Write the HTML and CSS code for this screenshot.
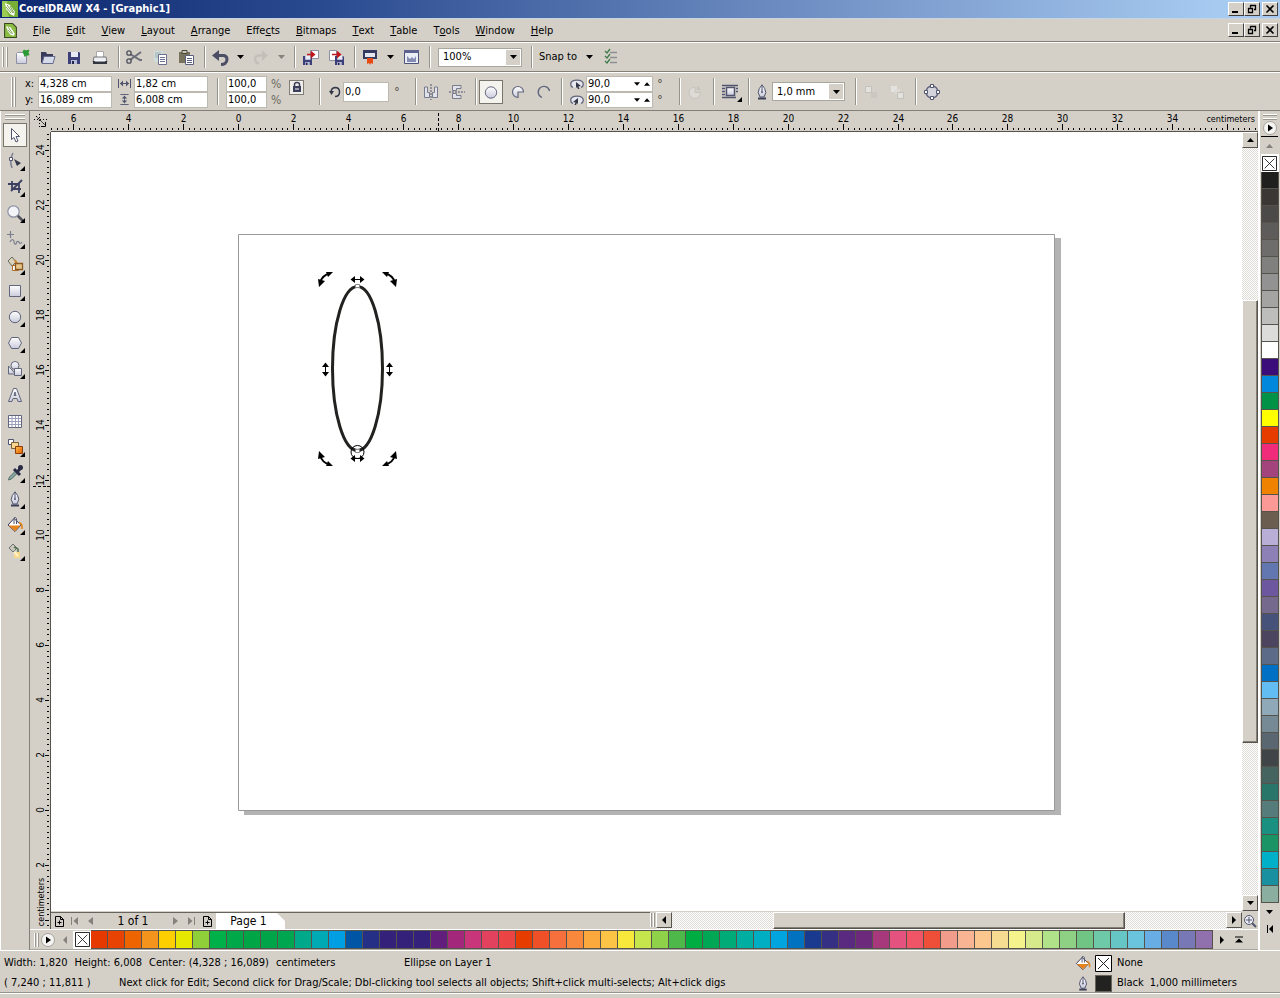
FILE: index.html
```html
<!DOCTYPE html>
<html lang="en">
<head>
<meta charset="utf-8">
<title>CorelDRAW X4 - [Graphic1]</title>
<link rel="stylesheet" href="styles.css">
</head>
<body>
<svg class="defs" aria-hidden="true">
  <defs>
    <linearGradient id="glass" x1="0" y1="0" x2="0" y2="1"><stop offset="0" stop-color="#fff"/><stop offset="1" stop-color="#c9cbdc"/></linearGradient>
    <linearGradient id="orange" x1="0" y1="0" x2="1" y2="1"><stop offset="0" stop-color="#ffc04a"/><stop offset="1" stop-color="#e25a00"/></linearGradient>
    <symbol id="down" viewBox="0 0 7 4"><path d="M0 0h7L3.500 4z" fill="currentColor"/></symbol>
    <symbol id="up" viewBox="0 0 7 4"><path d="M0 4h7L3.500 0z" fill="currentColor"/></symbol>
    <symbol id="left" viewBox="0 0 4 8"><path d="M4 0v8L0 4z" fill="currentColor"/></symbol>
    <symbol id="right" viewBox="0 0 4 8"><path d="M0 0v8l4-4z" fill="currentColor"/></symbol>
    <symbol id="disk" viewBox="0 0 12 12"><path d="M0 0h11l1 1v11H0z" fill="#3c3f78"/><path d="M3 0h7v5H3z" fill="#e8eaf4"/><path d="M3 8h6v4H3z" fill="#b9bed8"/><path d="M4 9h2v3H4z" fill="#23254c"/></symbol>
    <symbol id="balloon" viewBox="0 0 16 16"><path d="M0 0h16v16H0z" fill="#77ae35"/><path d="M0 0h6l-3 5 4 11H0z" fill="#9bcb52"/><path d="M3 2l5 2 5 7-1 4-4-2-4-5z" fill="#fff"/><path d="M5 4l6 8M8 5l4 7M4 6l5 6" stroke="#568a20" stroke-width=".8"/></symbol>
    <symbol id="bucket" viewBox="0 0 16 16"><path d="M7 1.500L14 8l-6 6.500L1 8z" fill="#fff" stroke="#35385a"/><path d="M1.500 8.500h12L8 14.200z" fill="#e8841c"/><path d="M7 7V1.500q0-1.500 1.500-1t1 3V7" fill="none" stroke="#50546e"/><path d="M12 6q3.500 0 3 6" fill="none" stroke="#e08a28" stroke-width="1.800"/></symbol>
    <symbol id="nib" viewBox="0 0 12 16"><path d="M6 .8Q2.500 4.500 2.200 8.500L4 13h4l1.800-4.500Q9.500 4.500 6 .8z" fill="url(#glass)" stroke="#50546e"/><path d="M6 2v5" stroke="#50546e"/><circle cx="6" cy="8" r="1" fill="#50546e"/><path d="M2 13.500h8v2H2z" fill="#3c4058"/></symbol>
    <symbol id="none" viewBox="0 0 17 17"><path d="M.5.5h16v16H.5z" fill="#fff" stroke="#000"/><path d="M3 3l11 11M14 3L3 14" stroke="#222"/></symbol>
    <symbol id="play" viewBox="0 0 14 14"><circle cx="7" cy="7" r="6.500" fill="#f4f4f2" stroke="#a5a39b"/><path d="M5 3.500v7L10 7z" fill="#000"/></symbol>
    <symbol id="addpage" viewBox="0 0 9 11"><path d="M.5.500h5l3 3v7h-8zM5.500.500v3h3M2.500 6.500h4M4.500 4.500v4" fill="none" stroke="#000"/></symbol>
    <symbol id="min" viewBox="0 0 12 10"><path d="M2 7h6v2H2z"/></symbol>
    <symbol id="restore" viewBox="0 0 12 10"><path d="M4 1.500h6M4.500 1v2.500M9.500 1v4.500H8M2 4.500h5M2.500 4v4.500h4V4" fill="none" stroke="#000" stroke-width="1.300"/></symbol>
    <symbol id="close" viewBox="0 0 12 10"><path d="M2.500 1.500l7 7M9.500 1.500l-7 7" stroke="#000" stroke-width="1.600"/></symbol>
    <symbol id="angle" viewBox="0 0 14 10"><path d="M3 8.500Q.7 7.500.7 5.200.7 1.200 7 1.200t6.300 4Q13.300 7.500 11 8.500" fill="#e6e7ee" stroke="#62667c" stroke-width="1.300"/></symbol>
  </defs>
</svg>

<header class="titlebar">
  <svg class="i16"><use href="#balloon"/></svg>
  <h1 class="title">CorelDRAW X4 - [Graphic1]</h1>
  <div class="winbtns">
    <button class="winbtn" aria-label="Minimize"><svg><use href="#min"/></svg></button><button class="winbtn" aria-label="Restore"><svg><use href="#restore"/></svg></button><button class="winbtn apart" aria-label="Close"><svg><use href="#close"/></svg></button>
  </div>
</header>

<nav class="menubar">
  <svg class="docicon" viewBox="0 0 12 14"><path d="M.5.5H8L11.500 4v9.500H.5z" fill="#8cbd45" stroke="#38481e"/><path d="M2 3l4 1 4 6-1 2-3-1-3-4z" fill="#fff"/><path d="M4 4l4 6M3 6l4 4" stroke="#568a20" stroke-width=".7"/></svg>
  <button class="menu"><u>F</u>ile</button>
  <button class="menu"><u>E</u>dit</button>
  <button class="menu"><u>V</u>iew</button>
  <button class="menu"><u>L</u>ayout</button>
  <button class="menu"><u>A</u>rrange</button>
  <button class="menu">Effe<u>c</u>ts</button>
  <button class="menu"><u>B</u>itmaps</button>
  <button class="menu"><u>T</u>ext</button>
  <button class="menu"><u>T</u>able</button>
  <button class="menu">T<u>o</u>ols</button>
  <button class="menu"><u>W</u>indow</button>
  <button class="menu"><u>H</u>elp</button>
  <div class="winbtns">
    <button class="winbtn" aria-label="Minimize document"><svg><use href="#min"/></svg></button><button class="winbtn" aria-label="Restore document"><svg><use href="#restore"/></svg></button><button class="winbtn apart" aria-label="Close document"><svg><use href="#close"/></svg></button>
  </div>
</nav>

<div class="bar standard" role="toolbar" aria-label="Standard">
  <span class="grip"></span>
  <button class="tb" aria-label="New"><svg viewBox="0 0 18 18"><path d="M3.500 5.500l1-1h7l2 2v9h-10z" fill="url(#glass)" stroke="#8d90a4"/><path d="M11 2l2 1 3-1-1 2.500 1 2.500-2.500 0-1.500 1.500-1-2.500-1-2z" fill="#2c9a34" stroke="#2c9a34"/></svg></button>
  <button class="tb" aria-label="Open"><svg viewBox="0 0 18 18"><path d="M2 15V4h5l1 2h6v3" fill="#383b5c"/><path d="M3 15.500L5 8.500h11l-2 7z" fill="#d5dae9" stroke="#65698a"/></svg></button>
  <button class="tb" aria-label="Save"><svg viewBox="0 0 18 18"><use href="#disk" x="3" y="4" width="12" height="12"/></svg></button>
  <button class="tb" aria-label="Print"><svg viewBox="0 0 18 18"><path d="M5.500 10V3.500h7V10" fill="#fff" stroke="#aaa"/><path d="M3 9h12l1 5H2z" fill="#eceef3" stroke="#777"/><path d="M2 13h14v3H2z" fill="#33353f"/><path d="M4 13h10" stroke="#fff"/></svg></button>
  <span class="sep"></span>
  <button class="tb" aria-label="Cut"><svg viewBox="0 0 18 18"><path d="M5 6l10 6h2M5 12l11-8" fill="none" stroke="#6b6d78" stroke-width="2"/><circle cx="4" cy="5" r="2.200" fill="none" stroke="#50525c" stroke-width="1.300"/><circle cx="4" cy="13" r="2.200" fill="none" stroke="#50525c" stroke-width="1.300"/></svg></button>
  <button class="tb" aria-label="Copy"><svg viewBox="0 0 18 18"><path d="M3 3h9v11H3z" fill="#cfdcdc"/><path d="M4 5h6M4 7h3M4 9h3" stroke="#9bb1ad"/><path d="M7.500 6.500h8v10h-8z" fill="#fff" stroke="#6b7090"/><path d="M9 9.500h5M9 11.500h5M9 13.500h5" stroke="#6b7090"/></svg></button>
  <button class="tb" aria-label="Paste"><svg viewBox="0 0 18 18"><path d="M2 4h11v11H2z" fill="#77735c"/><path d="M5 2.500h5v3H5z" fill="#c9c7b8" stroke="#4a4939"/><path d="M8.500 7.500h8v9h-8z" fill="#fff" stroke="#5b607c"/><path d="M10 10.500h5M10 12.500h5M10 14.500h5" stroke="#5b607c"/></svg></button>
  <span class="sep"></span>
  <button class="tb" aria-label="Undo"><svg viewBox="0 0 18 18"><path d="M5 7.500h7q4 0 4 4 0 2-2 4-1.500 1-4 1" fill="none" stroke="#4b4e64" stroke-width="3"/><path d="M8 2v11L1 7.500z" fill="#4b4e64"/></svg></button>
  <button class="drop" aria-label="Undo list"><svg><use href="#down"/></svg></button>
  <button class="tb" aria-label="Redo" disabled><svg viewBox="0 0 18 18"><path d="M13 7.500H7q-4 0-4 4 0 3 4 4" fill="none" stroke="#c3c0b9" stroke-width="2.500"/><path d="M10 2v11l6-5.500z" fill="#c3c0b9"/></svg></button>
  <button class="drop off" aria-label="Redo list" disabled><svg><use href="#down"/></svg></button>
  <span class="sep"></span>
  <button class="tb" aria-label="Import"><svg viewBox="0 0 18 18"><path d="M9.500 2.500h8v8h-8z" fill="#fff" stroke="#8d90a4"/><use href="#disk" x="2" y="8" width="9" height="9"/><path d="M6 6.500h6M10.500 4l3 2.500-3 2.500z" fill="#c3161c" stroke="#c3161c" stroke-width="1.300"/></svg></button>
  <button class="tb" aria-label="Export"><svg viewBox="0 0 18 18"><path d="M2.500 2.500h7v10h-7z" fill="#fff" stroke="#8d90a4"/><use href="#disk" x="8" y="8" width="9" height="9"/><path d="M5 6.500h7M10.500 4l3 2.500-3 2.500z" fill="#c3161c" stroke="#c3161c" stroke-width="1.300"/></svg></button>
  <span class="sep"></span>
  <button class="tb" aria-label="Application launcher"><svg viewBox="0 0 18 18"><path d="M2 2h14v9H2z" fill="#353a60"/><path d="M4 5h10v4H4z" fill="#e4e7ef"/><path d="M6 10h6v6l-2-1-1 2-1-2-2 1z" fill="#e84a16"/></svg></button>
  <button class="drop" aria-label="Launcher list"><svg><use href="#down"/></svg></button>
  <button class="tb" aria-label="Welcome screen"><svg viewBox="0 0 18 18"><path d="M2.500 2.500h14v13h-14z" fill="#eceef6" stroke="#4d5278"/><path d="M2 2h15v3H2z" fill="#5d638e"/><path d="M5 8v6h9V8l-2 3-2-2-2 2z" fill="#858cb4"/></svg></button>
  <span class="sep"></span>
  <label class="combo zoom"><select aria-label="Zoom level"><option>100%</option></select><span class="comboarrow"><svg><use href="#down"/></svg></span></label>
  <span class="sep snapsep"></span>
  <button class="snap">Snap to<svg><use href="#down"/></svg></button>
  <button class="tb options" aria-label="Options"><svg viewBox="0 0 18 18"><path d="M8 4.500h7M8 9.500h7M8 14.500h7" stroke="#8c8f94" stroke-width="1.400"/><path d="M3 3l2 2 3-4M3 8l2 2 3-4M3 13l2 2 3-4" fill="none" stroke="#3f7a4a" stroke-width="1.300"/></svg></button>
</div>

<div class="bar property" role="toolbar" aria-label="Property bar">
  <span class="grip"></span>
  <div class="pairs position">
    <label for="px">x:</label><input id="px" value="4,328 cm">
    <label for="py">y:</label><input id="py" value="16,089 cm">
  </div>
  <div class="pairs size">
    <label for="pw" aria-label="Width"><svg viewBox="0 0 13 10"><path d="M.5.500v9M12.500.500v9M2 5h9" stroke="#50546e"/><path d="M5 2v6L2 5zM8 2v6l3-3z" fill="#50546e"/></svg></label><input id="pw" value="1,82 cm">
    <label for="ph" aria-label="Height"><svg viewBox="0 0 13 12"><path d="M2 .5h9M2 11.500h9M6.500 2v8" stroke="#50546e"/><path d="M3.500 5h6l-3-3zM3.500 7h6l-3 3z" fill="#50546e"/></svg></label><input id="ph" value="6,008 cm">
  </div>
  <span class="sep wide"></span>
  <div class="pairs scale">
    <input id="sx" value="100,0" aria-label="Scale X"><label for="sx">%</label>
    <input id="sy" value="100,0" aria-label="Scale Y"><label for="sy">%</label>
  </div>
  <button class="lock" aria-label="Nonproportional scaling"><svg viewBox="0 0 12 12"><path d="M2 5h8v6H2z" fill="#3c3f5c"/><path d="M3.500 5V3.500q0-2 2.500-2t2.500 2V5" fill="none" stroke="#3c3f5c" stroke-width="1.500"/><path d="M4 8h4" stroke="#fff"/></svg></button>
  <span class="sep wide"></span>
  <label class="rotate"><svg viewBox="0 0 12 12"><path d="M2 6.500Q2 2 6 1.500q4.500 0 4.500 4.500t-4.500 4.500" fill="none" stroke="#333748" stroke-width="1.500"/><path d="M0 5h5L2.500 9z" fill="#333748"/></svg><input value="0,0" aria-label="Angle of rotation"></label>
  <span class="degree">°</span>
  <span class="sep near"></span>
  <button class="tb" aria-label="Mirror horizontally"><svg viewBox="0 0 18 18"><path d="M2.500 4v10.500h5V9.500h-2V4zM15.500 4v10.500h-5V9.500h2V4z" fill="#e2e3ea" stroke="#777b8e"/><path d="M9 1v16" stroke="#50546e" stroke-dasharray="2 1"/></svg></button>
  <button class="tb" aria-label="Mirror vertically"><svg viewBox="0 0 18 18"><path d="M13 2.500H4.500v5h4v-2H13zM13 15.500H4.500v-5h4v2H13z" fill="#e2e3ea" stroke="#777b8e"/><path d="M1 9h16" stroke="#50546e" stroke-dasharray="2 1"/></svg></button>
  <span class="sep"></span>
  <button class="tb on" aria-label="Ellipse"><svg viewBox="0 0 18 18"><circle cx="9" cy="9.500" r="5.700" fill="url(#glass)" stroke="#62667c"/></svg></button>
  <button class="tb" aria-label="Pie"><svg viewBox="0 0 18 18"><path d="M9 9h5.500A5.500 5.500 0 1 0 9 14.500z" fill="url(#glass)" stroke="#62667c" stroke-width="1.200"/></svg></button>
  <button class="tb" aria-label="Arc"><svg viewBox="0 0 18 18"><path d="M7 14.500A5.700 5.700 0 1 1 14.500 8" fill="none" stroke="#62667c" stroke-width="1.300"/></svg></button>
  <span class="sep arcsep"></span>
  <div class="pairs angles">
    <label for="a1" aria-label="Starting angle"><svg viewBox="0 0 14 10"><use href="#angle"/><path d="M6 3l5 4-2.500.5L9.500 10H8L7 8 6 9z" fill="#333748"/></svg></label><span class="spin"><input id="a1" value="90,0"><button aria-label="Decrease"><svg><use href="#down"/></svg></button><button aria-label="Increase"><svg><use href="#up"/></svg></button></span><span class="degree">°</span>
    <label for="a2" aria-label="Ending angle"><svg viewBox="0 0 14 10"><use href="#angle"/><path d="M8 3L3 7l2.500.5L4.500 10H6L7 8l1 1z" fill="#333748"/></svg></label><span class="spin"><input id="a2" value="90,0"><button aria-label="Decrease"><svg><use href="#down"/></svg></button><button aria-label="Increase"><svg><use href="#up"/></svg></button></span><span class="degree">°</span>
  </div>
  <span class="sep near"></span>
  <button class="tb" aria-label="Arc direction" disabled><svg viewBox="0 0 18 18"><path d="M9 9.500V4a5.700 5.700 0 1 0 5.500 5.500z" fill="#dedbd6" stroke="#c6c3bc"/><path d="M11 7V3l3 2v2z" fill="#c6c3bc"/></svg></button>
  <span class="sep"></span>
  <button class="tb fly" aria-label="Wrap paragraph text"><svg viewBox="0 0 18 18"><path d="M1 2.500h16M1 5.500h3M1 8.500h3M1 11.500h3M1 14.500h14M15 5.500h2M15 8.500h2" stroke="#50546e" stroke-width="1.300"/><path d="M5.500 4.500h8v8h-8z" fill="url(#glass)" stroke="#50546e" stroke-width="1.500"/></svg></button>
  <span class="sep"></span>
  <svg class="penicon"><use href="#nib"/></svg>
  <label class="combo outline"><select aria-label="Outline width"><option>1,0 mm</option></select><span class="comboarrow"><svg><use href="#down"/></svg></span></label>
  <span class="sep near"></span>
  <button class="tb" aria-label="To front" disabled><svg viewBox="0 0 18 18"><path d="M9 9h6v6H9z" fill="#cbc8c1"/><path d="M3.500 3.500h6v6h-6z" fill="#e4e2df" stroke="#c3c0b9"/></svg></button>
  <button class="tb" aria-label="To back" disabled><svg viewBox="0 0 18 18"><path d="M3 3h6v6H3z" fill="#e4e2df"/><path d="M7 6h5v5H7z" fill="#dedbd6"/><path d="M9.500 9.500h6v6h-6z" fill="#e4e2df" stroke="#c3c0b9"/></svg></button>
  <span class="sep"></span>
  <button class="tb" aria-label="Convert to curves"><svg viewBox="0 0 18 18"><circle cx="9" cy="9" r="6" fill="#d4d4dc" stroke="#62667c" stroke-width="1.500"/><path d="M7.500 1.500h3v3h-3zM7.500 13.500h3v3h-3zM1.500 7.500h3v3h-3zM13.500 7.500h3v3h-3z" fill="#fff" stroke="#50546e"/></svg></button>
</div>

<main class="middle">
  <div class="toolbox" role="toolbar" aria-label="Toolbox">
    <span class="hgrip"></span>
    <button class="tool on" aria-label="Pick"><svg viewBox="0 0 18 18"><path d="M5.500 2.500v11l2.500-2 2 4.500 2-1-2-4.500h3.500z" fill="#fff" stroke="#50546e"/></svg></button>
    <button class="tool fly" aria-label="Shape"><svg viewBox="0 0 18 18"><path d="M7 1Q3 8 6 16" fill="none" stroke="#777b8e" stroke-width="1.500"/><path d="M3.500 5.500h3v3h-3z" fill="#fff" stroke="#50546e"/><path d="M8 7l7 4-4 3z" fill="#333748"/></svg></button>
    <button class="tool fly" aria-label="Crop"><svg viewBox="0 0 18 18"><path d="M2 6h11v9M6 3v8h9M5 13L16 2" fill="none" stroke="#3c4060" stroke-width="1.800"/></svg></button>
    <button class="tool fly" aria-label="Zoom"><svg viewBox="0 0 18 18"><path d="M11 11l6 6" stroke="#50525c" stroke-width="2.500"/><circle cx="7.500" cy="7.500" r="5.700" fill="#f3f4f8" stroke="#8d90a4" stroke-width="1.200"/></svg></button>
    <button class="tool fly" aria-label="Freehand"><svg viewBox="0 0 18 18"><path d="M4.500 1v7M1 4.500h7M4 12q2-4 4-1 0 4 2 3 1-4 3-2 1 3 3 0" fill="none" stroke="#7b7e8c" stroke-width="1.200"/></svg></button>
    <button class="tool fly" aria-label="Smart fill"><svg viewBox="0 0 18 18"><path d="M2 5l4-4 4 5-4 4z" fill="#d9d3bd" stroke="#6a665a"/><path d="M9 4l2 4" stroke="#d0842a" stroke-width="2"/><path d="M6.500 9.500h6v5h-6z" fill="#fff" stroke="#b06c20"/><path d="M9.500 7.500h7v6h-7z" fill="#e5c78e" stroke="#8a5820" stroke-width="1.300"/></svg></button>
    <button class="tool fly" aria-label="Rectangle"><svg viewBox="0 0 18 18"><path d="M3.500 3.500h11v11h-11z" fill="url(#glass)" stroke="#62667c"/></svg></button>
    <button class="tool fly" aria-label="Ellipse tool"><svg viewBox="0 0 18 18"><circle cx="9" cy="9" r="5.700" fill="url(#glass)" stroke="#62667c"/></svg></button>
    <button class="tool fly" aria-label="Polygon"><svg viewBox="0 0 18 18"><path d="M5.500 3.500h7L15.500 9l-3 5.500h-7L2.500 9z" fill="url(#glass)" stroke="#62667c"/></svg></button>
    <button class="tool fly" aria-label="Basic shapes"><svg viewBox="0 0 18 18"><circle cx="9" cy="5.500" r="4" fill="url(#glass)" stroke="#62667c"/><path d="M2.500 6v8h7z" fill="url(#glass)" stroke="#62667c"/><path d="M8.500 8.500h7v7h-7z" fill="url(#glass)" stroke="#62667c"/></svg></button>
    <button class="tool" aria-label="Text"><svg viewBox="0 0 18 18"><path d="M2.500 15.500L7.500 2.500h3l5 13h-3.500l-1-3h-4l-1 3zM8 9.500h2L9 6z" fill="url(#glass)" stroke="#62667c" fill-rule="evenodd"/></svg></button>
    <button class="tool" aria-label="Table"><svg viewBox="0 0 18 18"><path d="M2.500 3.500h13v12h-13z" fill="#fff" stroke="#62667c"/><path d="M6 4v11M9.500 4v11M12.500 4v11M3 6.500h12M3 9.500h12M3 12.500h12" stroke="#9b9fba"/></svg></button>
    <button class="tool fly" aria-label="Blend"><svg viewBox="0 0 18 18"><path d="M2.500 1.500h5v5h-5z" fill="#fff" stroke="#50546e"/><path d="M5.500 4.500h7v6h-7z" fill="#f6d690" stroke="#7e6134"/><path d="M9.500 8.500h7v7h-7z" fill="url(#orange)" stroke="#8f3d08"/></svg></button>
    <button class="tool fly" aria-label="Eyedropper"><svg viewBox="0 0 18 18"><path d="M2.500 16l1-3 7-7 2 2-7 7z" fill="#86a69d" stroke="#55706a"/><path d="M8 5l6 6M11 8l4-4" stroke="#292c44" stroke-width="3"/><circle cx="14.500" cy="3.500" r="2.500" fill="#292c44"/></svg></button>
    <button class="tool fly" aria-label="Outline"><svg viewBox="0 0 18 18"><use href="#nib" x="3" y="1" width="12" height="16"/></svg></button>
    <button class="tool fly" aria-label="Fill"><svg viewBox="0 0 18 18"><use href="#bucket" x="1" y="1" width="16" height="16"/></svg></button>
    <button class="tool fly" aria-label="Interactive fill"><svg viewBox="0 0 18 18"><path d="M3 6l4-4 4 4-4 4z" fill="#c9c8bb" stroke="#6f7176"/><path d="M8 5l4 2v3" fill="none" stroke="#52724f" stroke-width="1.500"/><path d="M8 10h6v6H8z" fill="#fbd98c"/><path d="M8 10l4 4" stroke="#fff3c8" stroke-width="2"/></svg></button>
  </div>

  <div class="document">
    <div class="workspace">
      <div class="origin"><svg viewBox="0 0 20 20"><path d="M9.500 3v13M4 8.500h13" stroke="#000" stroke-dasharray="1 2"/><path d="M6 5l9 9" stroke="#000" stroke-dasharray="2 1"/><path d="M11 15.500h4.500V11" fill="none" stroke="#000"/></svg></div>
      <svg class="ruler hruler" id="hruler" aria-label="Horizontal ruler"></svg>
      <svg class="ruler vruler" id="vruler" aria-label="Vertical ruler"></svg>
      <svg class="canvas" aria-label="Drawing page">
        <path d="M1004 106h6v577H193v-5h811z" fill="#b3b3b3"/>
        <path d="M187.500 102.500h816v576h-816z" fill="#fff" stroke="#999"/>
        <ellipse cx="306.500" cy="236.500" rx="25" ry="82" fill="#fff" stroke="#222220" stroke-width="3"/>
        <g id="handles">
          <g id="skew"><path d="M300 147.500h13" stroke="#000"/><path d="M304 144v7l-4.500-3.500zM309 144v7l4.500-3.500z"/></g>
          <g id="turn"><path d="M269 151Q271 143 279 141.500" fill="none" stroke="#000" stroke-width="1.800"/><path d="M267 147l7 2-6 6zM275 140h7l-5 5z"/></g>
        </g>
        <use href="#turn" transform="matrix(-1 0 0 1 613 0)"/>
        <use href="#turn" transform="matrix(1 0 0 -1 0 474)"/>
        <use href="#turn" transform="matrix(-1 0 0 -1 613 474)"/>
        <use href="#skew" transform="translate(0 179)"/>
        <use href="#skew" transform="rotate(-90 306.500 147.500) translate(-90 -32)"/>
        <use href="#skew" transform="rotate(-90 306.500 147.500) translate(-90 32)"/>
        <circle cx="306.500" cy="320" r="6.500" fill="none" stroke="#000"/>
        <path d="M304.500 152.500h4v3h-4zM304.500 317.500h4v3h-4z" fill="#fff" stroke="#888"/>
      </svg>
      <div class="vscroll">
        <button class="sbtn" aria-label="Scroll up"><svg class="v"><use href="#up"/></svg></button>
        <span class="thumb"></span>
        <button class="sbtn" aria-label="Scroll down"><svg class="v"><use href="#down"/></svg></button>
      </div>
      <div class="bottom">
        <div class="pages">
          <button aria-label="Add page before"><svg class="add"><use href="#addpage"/></svg></button>
          <button class="off" aria-label="First page"><svg viewBox="0 0 8 8"><path d="M.5 0v8" stroke="currentColor"/><path d="M7 0v8L2.500 4z" fill="currentColor"/></svg></button>
          <button class="off" aria-label="Previous page"><svg viewBox="0 0 8 8"><path d="M6 0v8L1 4z" fill="currentColor"/></svg></button>
          <span class="count">1 of 1</span>
          <button class="off" aria-label="Next page"><svg viewBox="0 0 8 8"><path d="M2 0v8l5-4z" fill="currentColor"/></svg></button>
          <button class="off" aria-label="Last page"><svg viewBox="0 0 8 8"><path d="M7.500 0v8" stroke="currentColor"/><path d="M1 0v8l4.500-4z" fill="currentColor"/></svg></button>
          <button aria-label="Add page after"><svg class="add"><use href="#addpage"/></svg></button>
          <button class="tab">Page 1</button>
        </div>
        <span class="grip split"></span>
        <div class="hscroll">
          <button class="sbtn" aria-label="Scroll left"><svg class="h"><use href="#left"/></svg></button>
          <span class="thumb"></span>
          <button class="sbtn" aria-label="Scroll right"><svg class="h"><use href="#right"/></svg></button>
        </div>
        <button class="nav" aria-label="Navigator"><svg viewBox="0 0 14 14"><path d="M9 9l4 4" stroke="#50546e" stroke-width="2"/><circle cx="6" cy="6" r="4.500" fill="#eceef6" stroke="#50546e"/><path d="M6 3v6M3 6h6" stroke="#50546e"/></svg></button>
      </div>
    </div>
    <div class="palette row">
      <span class="grip"></span>
      <button class="pbtn play" aria-label="Palette menu"><svg class="pl"><use href="#play"/></svg></button>
      <button class="pbtn off" aria-label="Scroll palette left"><svg class="h"><use href="#left"/></svg></button>
      <button class="nofill" aria-label="No color"><svg><use href="#none"/></svg></button>
      <div class="swatches" id="docpalette"></div>
      <button class="pbtn next" aria-label="Scroll palette right"><svg class="h"><use href="#right"/></svg></button>
      <button class="pbtn" aria-label="Expand palette"><svg class="ex" viewBox="0 0 8 7"><path d="M0 .5h8" stroke="#000"/><path d="M0 6h8L4 2z"/></svg></button>
    </div>
  </div>

  <div class="palette col">
    <span class="hgrip"></span>
    <button class="pbtn" aria-label="Color menu"><svg class="pl"><use href="#play"/></svg></button>
    <button class="pbtn off upc" aria-label="Scroll palette up"><svg class="v"><use href="#up"/></svg></button>
    <button class="nofill" aria-label="No color"><svg><use href="#none"/></svg></button>
    <div class="swatches" id="mainpalette"></div>
    <button class="pbtn" aria-label="Scroll palette down"><svg class="v"><use href="#down"/></svg></button>
    <button class="pbtn" aria-label="Expand color palette"><svg class="ex" viewBox="0 0 8 8"><path d="M1.500 0v8" stroke="#000"/><path d="M7 0v8L3 4z"/></svg></button>
  </div>
</main>

<footer class="status">
  <div class="info">
    <div class="line"><span class="dims"><span>Width: 1,820</span><span>Height: 6,008</span><span>Center: (4,328 ; 16,089)</span><span>centimeters</span></span><span>Ellipse on Layer 1</span></div>
    <div class="line"><span class="coords">( 7,240 ; 11,811 )</span><span>Next click for Edit; Second click for Drag/Scale; Dbl-clicking tool selects all objects; Shift+click multi-selects; Alt+click digs</span></div>
  </div>
  <div class="attrs">
    <svg class="aicon"><use href="#bucket"/></svg><svg class="chip"><use href="#none"/></svg><span>None</span>
    <svg class="aicon"><use href="#nib"/></svg><span class="chip black"></span><span class="pen"><span>Black</span><span>1,000 millimeters</span></span>
  </div>
</footer>
<script src="app.js"></script>
</body>
</html>
```
FILE: styles.css
```css
:root {
  --face: #d4d0c8;
  --dark: #848078;
}
* { box-sizing: border-box; }
body {
  margin: 0;
  min-height: 100vh;
  display: flex;
  flex-direction: column;
  background: var(--face);
  color: #000;
  font: 11px/14px "DejaVu Sans Condensed", "DejaVu Sans", sans-serif;
  overflow: hidden;
}
button, input, select { font: inherit; color: inherit; margin: 0; padding: 0; border: 0; border-radius: 0; background: none; }
input { min-width: 0; }
button { display: flex; align-items: center; justify-content: center; flex: none; }
svg { display: block; flex: none; }
.defs { position: absolute; width: 0; height: 0; }

/* window chrome */
.titlebar { display: flex; align-items: center; height: 19px; padding: 0 2px; gap: 1px; background: linear-gradient(90deg, #0d286e, #2a4a90 25%, #7595c8 66%, #a6caf0 95%); border-bottom: 1px solid #c8d4e4; }
.i16 { width: 16px; height: 16px; }
.title { margin: 0; font-size: 11px; line-height: 14px; font-weight: bold; color: #fff; }
.winbtns { display: flex; margin-left: auto; }
.winbtn { width: 16px; height: 14px; background: var(--face); border: 1px solid; border-color: #fff #404040 #404040 #fff; }
.winbtn svg { width: 12px; height: 10px; }
.winbtn.apart { margin-left: 2px; }
.menubar { display: flex; align-items: center; height: 23px; padding: 0 2px; border-bottom: 1px solid var(--dark); }
.menubar .docicon { width: 13px; height: 15px; margin: 0 8px 0 2px; }
.menu { height: 18px; padding: 0 8px; margin-top: 2px; }
.menu u { text-underline-offset: 1px; }

/* toolbars */
.bar { display: flex; align-items: center; border-top: 1px solid #fff; border-bottom: 1px solid var(--dark); }
.standard { height: 30px; }
.property { height: 39px; }
.grip { flex: none; width: 5px; height: 20px; border: solid #fff; border-width: 0 1px; box-shadow: 1px 0 0 #9a978f, inset 1px 0 0 #9a978f; }
.standard .grip { margin: 0 2px; }
.property .grip { height: 30px; margin: 0 10px 0 11px; width: 4px; }
.tb { width: 26px; height: 24px; position: relative; }
.tb svg { width: 18px; height: 18px; }
.tb.on, .tool.on { width: 24px; background: #f4f3ee; border: 1px solid #77756c; }
.tb.on { margin-right: 2px; }
.fly { position: relative; }
.fly::after { content: ""; position: absolute; right: 1px; bottom: 2px; border: solid; border-width: 0 0 5px 5px; border-color: transparent transparent #000; }
.drop { width: 15px; height: 24px; }
.drop svg, .snap svg, .comboarrow svg { width: 7px; height: 4px; }
.off { color: #85827b; }
.sep { flex: none; width: 2px; height: 22px; margin: 0 1px 0 5px; background: linear-gradient(90deg, #96938b 50%, #fff 50%); }
.property .sep { height: 27px; margin: 0 2px 0 5px; }
.property .sep.wide { margin: 0 8px 0 10px; }
.property .sep.near { margin: 0 1px 0 10px; }
.property .sep.arcsep { margin: 0 7px 0 4px; }
.combo { position: relative; display: block; border: 1px solid #a9a69e; background: #fff; height: 19px; }
.combo select { appearance: none; width: 100%; height: 17px; padding-left: 4px; }
.comboarrow { position: absolute; right: 1px; top: 1px; bottom: 1px; width: 14px; display: flex; align-items: center; justify-content: center; background: var(--face); pointer-events: none; }
.zoom { width: 84px; margin-left: 6px; }
.snapsep { margin-left: 9px; }
.snap { gap: 9px; padding: 0 5px; height: 22px; }
.options { margin-left: 0; }

.pairs { display: grid; align-items: center; row-gap: 2px; column-gap: 3px; }
.pairs input, .rotate input { height: 14px; padding: 0 1px; background: #fff; width: 100%; outline: 1px solid #bcb9b1; }
.position { grid-template-columns: 11px 72px; margin-right: 7px; }
.size { grid-template-columns: 14px 72px; }
.size svg { width: 13px; height: 11px; }
.scale { grid-template-columns: 39px 12px; column-gap: 5px; font-size: 12px; color: #6b6860; }
.scale input { font-size: 11px; color: #000; }
.lock { width: 15px; height: 15px; margin: -9px 5px 0 6px; background: #efeeea; border: 1px solid #807d75; }
.lock svg { width: 12px; height: 12px; }
.rotate { display: grid; grid-template-columns: 12px 44px; column-gap: 3px; align-items: center; }
.rotate svg { width: 12px; height: 12px; }
.rotate input { height: 18px; }
.degree { width: 8px; color: #55534c; font-size: 13px; line-height: 14px; }
.rotate + .degree { margin: 0 3px 0 6px; }
.angles { grid-template-columns: 14px 65px 8px; padding-right: 6px; }
.angles .degree { margin-left: 2px; }
.angles label svg { width: 14px; height: 10px; }
.spin { display: flex; background: #fff; outline: 1px solid #bcb9b1; }
.pairs .spin input { outline: 0; }
.spin button { width: 10px; }
.spin button svg { width: 6px; height: 4px; }
.penicon { width: 12px; height: 16px; margin: 0 4px; }
.outline { width: 73px; }

/* working area */
.middle { flex: 1; display: flex; min-height: 0; }
.toolbox { flex: none; width: 30px; padding: 3px 3px 0; display: flex; flex-direction: column; align-items: center; gap: 2px; border-left: 1px solid #fff; border-right: 1px solid var(--dark); }
.hgrip { flex: none; width: 20px; height: 5px; margin-bottom: 2px; border: solid #fff; border-width: 1px 0; box-shadow: 0 1px 0 #9a978f, inset 0 1px 0 #9a978f; }
.tool { width: 24px; height: 24px; }
.tool svg { width: 18px; height: 18px; }
.tool.fly::after { right: 2px; bottom: 2px; }
.document { flex: 1; min-width: 0; display: flex; flex-direction: column; }
.workspace { flex: 1; min-height: 0; display: grid; grid-template-columns: 21px 1fr 16px; grid-template-rows: 21px 1fr 18px; }
.origin svg { width: 20px; height: 20px; }
.ruler { width: 100%; height: 100%; overflow: hidden; font-size: 10px; }
.ruler .unit { font-size: 9px; }
.ruler line { stroke: #000; shape-rendering: crispEdges; }
.hruler { grid-column: 2 / 4; grid-row: 1; border-bottom: 1px solid #55534c; }
.vruler { grid-column: 1; grid-row: 2 / 4; border-right: 1px solid #55534c; }
.canvas { grid-column: 2; grid-row: 2; width: 100%; height: 100%; background: #fff; }
.vscroll { grid-column: 3; grid-row: 2; display: flex; flex-direction: column; }
.hscroll { flex: 586; min-width: 0; display: flex; }
.vscroll, .hscroll { background: conic-gradient(#fff 25%, #dedbd6 0 50%, #fff 0 75%, #dedbd6 0) 0 0 / 2px 2px; }
.sbtn { width: 16px; height: 16px; background: var(--face); border: 1px solid; border-color: #fff #55534c #55534c #fff; }
.thumb { background: var(--face); border: 1px solid; border-color: #fff #55534c #55534c #fff; box-shadow: inset -1px -1px 0 #848078; }
.vscroll .thumb { flex: 1; margin: 152px 0; }
.hscroll .thumb { flex: 1; margin: 0 101px; }
svg.v { width: 7px; height: 4px; }
svg.h { width: 4px; height: 8px; }
.bottom { grid-column: 2 / 4; grid-row: 3; display: flex; align-items: flex-end; }
.bottom > * { height: 17px; }
.pages { flex: 599; min-width: 0; display: flex; align-items: center; border-top: 1px solid #66645c; }
.pages button { width: 16px; height: 16px; }
.pages svg { width: 8px; height: 8px; }
.pages svg.add { width: 9px; height: 11px; }
.pages .count { width: 68px; text-align: center; font-size: 12px; }
.pages button.tab { width: 69px; height: 16px; margin-left: 1px; padding-right: 4px; background: #fff; clip-path: polygon(0 0, 61px 0, 100% 8px, 100% 100%, 0 100%); font-size: 12px; }
.bottom .split { width: 4px; height: 14px; margin: 0 2px 2px 0; }
.nav { width: 16px; }
.nav svg { width: 14px; height: 14px; }

/* colour palettes */
.palette { flex: none; display: flex; align-items: center; }
.palette.row { height: 21px; border-top: 1px solid #fff; border-bottom: 1px solid #aaa79f; }
.palette.col { width: 22px; flex-direction: column; border-left: 2px solid #fff; padding: 3px 1px 0 0; }
.row .grip { height: 14px; width: 4px; margin: 0 1px 0 4px; }
.col .hgrip { width: 14px; margin: 0; }
.pbtn { width: 17px; height: 17px; }
.pbtn .pl { width: 14px; height: 14px; }
.pbtn .ex { width: 8px; height: 8px; }
.upc.pbtn { height: 18px; border-top: 1px solid #000; }
.nofill { width: 18px; height: 18px; background: #fff; }
.nofill svg { width: 15px; height: 15px; }
.swatches { display: flex; min-width: 0; overflow: hidden; border: solid #55534c; }
.row .swatches { border-width: 1px 0; }
.col .swatches { flex-direction: column; border-width: 0 1px; width: 18px; }
.swatch { display: block; width: 17px; height: 17px; border: solid #55534c; border-width: 0 1px 0 0; background: var(--c); }
.col .swatch { width: 16px; border-width: 0 0 1px; }

/* status bar */
.status { flex: none; display: flex; height: 48px; padding: 2px 0 0; border-top: 1px solid #fff; position: relative; }
.status::after { content: ""; position: absolute; left: 0; right: 0; bottom: 4px; height: 2px; background: linear-gradient(#96938b 50%, #fff 50%); }
.line { display: flex; height: 20px; align-items: center; white-space: nowrap; }
.info { flex: 1; min-width: 0; padding-left: 4px; }
.dims { display: flex; gap: 7px; width: 400px; }
.coords { width: 115px; }
.attrs { flex: none; width: 205px; display: grid; grid-template-columns: 16px 18px 1fr; grid-auto-rows: 20px; align-items: center; column-gap: 4px; align-content: start; }
.aicon { width: 16px; height: 15px; }
.chip { width: 17px; height: 17px; }
.black { background: #222220; border: 1px solid #66645c; }
.pen { display: flex; gap: 6px; }
```
FILE: app.js
```js
const NS = "http://www.w3.org/2000/svg";
const CM = 27.48;

function add(svg, name, attrs, text) {
  const el = document.createElementNS(NS, name);
  for (const key in attrs) el.setAttribute(key, attrs[key]);
  if (text !== undefined) el.textContent = text;
  svg.appendChild(el);
}

// Ticks every 0.2 cm, numbered every 2 cm.
const h = document.getElementById("hruler");
for (let i = -34; i <= 185; i++) {
  const x = Math.round(187 + i * CM / 5);
  const major = i % 10 === 0;
  add(h, "line", { x1: x + .5, x2: x + .5, y1: major ? 13 : 17, y2: 19 });
  if (major && i < 180) add(h, "text", { x: x + .5, y: 11, "text-anchor": "middle" }, Math.abs(i / 5));
}
add(h, "text", { class: "unit", x: 1204, y: 11, "text-anchor": "end" }, "centimeters");
add(h, "line", { x1: 387.5, x2: 387.5, y1: 2, y2: 20, "stroke-dasharray": "3 2" });

const v = document.getElementById("vruler");
for (let i = -21; i <= 123; i++) {
  const y = Math.round(678 - i * CM / 5);
  const major = i % 10 === 0;
  add(v, "line", { y1: y + .5, y2: y + .5, x1: major ? 15 : 17, x2: 19 });
  if (major && i > -20) add(v, "text", { x: 0, y: 0, "text-anchor": "middle", transform: `translate(14 ${y}) rotate(-90)` }, Math.abs(i / 5));
}
add(v, "text", { class: "unit", x: 0, y: 0, "text-anchor": "middle", transform: "translate(14 770) rotate(-90)" }, "centimeters");
add(v, "line", { x1: 3, x2: 20, y1: 354.5, y2: 354.5, "stroke-dasharray": "3 2" });

const docColors = `e63900 e94304 ee6400 f4941c fdce00 e6e800 8fd03a 00b049 00a84a 00a546 00a54a 00a650 00a98a 00aab5 009fe3 0055a5 262f86 33217a 33217a 33217c
611e7c a3287c c9357a e3425e ea4444 e63c00 ef5028 f5703c f7883c fba83c fcc447 f8e83c c6e44c 8fd148 4fb84a 00ad42 00a856 00ab78 00aea2 00aec4 00a4de 0072bf 193a8e 363085 5a2a80
6d297c a8387c e4527f ef5567 ef4f38 f29c8c f9b593 fbc78e f5dc90 f5f38c d6ea8c b0e28a 8fd184 70c584 6ec9a8 66c5c5 6bc4de 68aee4 5a89cb 7878b6 9070ad`;
const mainColors = `1f1f1d 3a3735 4b4a48 5d5c5a 6e6d6b 80807e 929292 a4a4a2 bdbdbb dcdcda ffffff 3a0d7a 0088dd 009348 ffff00 e63c00 ef2b7a a3457c ef8200 fb9996 6b5d50
b9afd6 8c80b6 6277b0 6d58a0 76698e 46527a 4c4560 5c6c88 0070c4 62bdf2 8fa9b8 768a96 5a6670 404648 456460 28756a 557c7a 1a9180 1b9465 00b0c8 1990a0 8aafa0`;

function fill(id, colors) {
  const box = document.getElementById(id);
  for (const c of colors.split(/\s+/)) {
    const b = document.createElement("button");
    b.className = "swatch";
    b.style.setProperty("--c", "#" + c);
    b.setAttribute("aria-label", "Color #" + c);
    box.appendChild(b);
  }
}
fill("docpalette", docColors);
fill("mainpalette", mainColors);
```
